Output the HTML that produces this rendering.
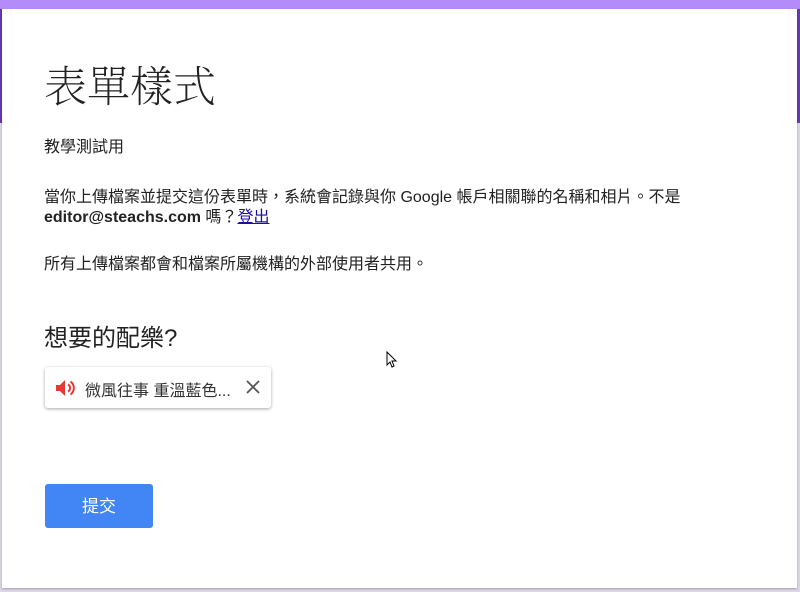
<!DOCTYPE html>
<html><head><meta charset="utf-8"><style>
body{margin:0;width:800px;height:592px;background:#dcd7e6;position:relative;overflow:hidden;font-family:"Liberation Sans","Noto Sans CJK TC",sans-serif;color:#212121}
.top{position:absolute;left:0;top:0;width:800px;height:123px;background:#673ab7}
.band{position:absolute;left:0;top:0;width:800px;height:9px;background:#b38cf9}
.card{position:absolute;left:2px;top:9px;width:795px;height:579px;background:#fff;box-shadow:0 1px 2px rgba(0,0,0,.25)}
.t{position:absolute;left:44px;top:54px;font:200 43px "Noto Serif CJK TC","Noto Serif CJK SC",serif;color:#222;margin:0}
.p{position:absolute;left:44px;font-size:16px;line-height:20px;color:#222}
.q{position:absolute;left:44px;top:318px;font:24px "Liberation Sans","Noto Sans CJK TC",sans-serif;color:#222}
.chip{position:absolute;left:45px;top:367px;width:226px;height:41px;background:#fff;border-radius:3px;box-shadow:0 1px 3px rgba(0,0,0,.35)}
.btn{position:absolute;left:45px;top:484px;width:108px;height:44px;background:#4285f4;border-radius:3px;color:#fff;font-size:17px;text-align:center;line-height:46px}
a{color:#1a0dab}
</style></head><body>
<div class="top"></div><div class="band"></div>
<div class="card"></div>
<div class="t">表單樣式</div>
<div class="p" style="top:138px">教學測試用</div>
<div class="p" style="top:188px">當你上傳檔案並提交這份表單時，系統會記錄與你 Google 帳戶相關聯的名稱和相片。不是<br><b>editor@steachs.com</b> 嗎？<a href="#">登出</a></div>
<div class="p" style="top:255px">所有上傳檔案都會和檔案所屬機構的外部使用者共用。</div>
<div class="q">想要的配樂?</div>
<div class="chip">
<svg style="position:absolute;left:10px;top:11px" width="22" height="20" viewBox="0 0 22 20"><path d="M1 7h4l5-5v16l-5-5H1z" fill="#e53935"/><path d="M13 6.5a4 4 0 0 1 0 7" stroke="#e53935" stroke-width="2" fill="none"/><path d="M15.5 3.5a8 8 0 0 1 0 13" stroke="#e53935" stroke-width="2" fill="none"/></svg>
<div style="position:absolute;left:40px;top:10px;font-size:16px;color:#333">微風往事 重溫藍色...</div>
<svg style="position:absolute;left:200px;top:12px" width="16" height="16" viewBox="0 0 16 16"><path d="M2 2L14 14M14 2L2 14" stroke="#555" stroke-width="1.8"/></svg>
</div>
<div class="btn">提交</div>
<svg style="position:absolute;left:386px;top:351px" width="12" height="18" viewBox="0 0 12 18"><path d="M1 1v13l3-3 2 5 2-1-2-5h4z" fill="#fff" stroke="#000" stroke-width="1"/></svg>
</body></html>
